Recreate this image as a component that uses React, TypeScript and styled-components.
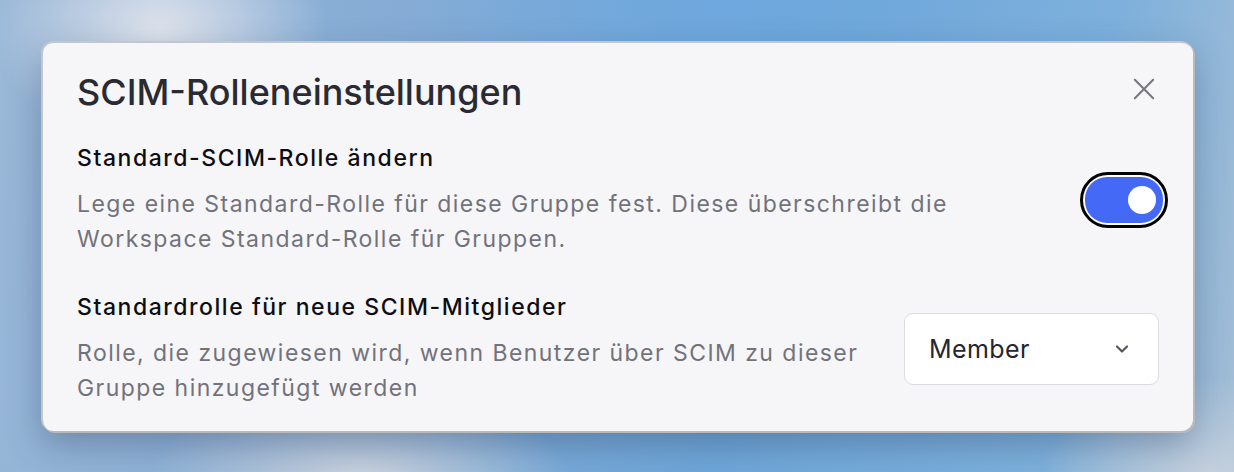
import React, { useState } from "react";
import styled, { createGlobalStyle } from "styled-components";

const GlobalStyle = createGlobalStyle`
  html, body {
    margin: 0;
    padding: 0;
    width: 1234px;
    height: 472px;
    overflow: hidden;
  }
  body {
    font-family: Inter, "Noto Sans", "Liberation Sans", sans-serif;
    -webkit-font-smoothing: antialiased;
  }
`;

const Backdrop = styled.div`
  width: 1234px;
  height: 472px;
  box-sizing: border-box;
  padding: 41px 41px 0 41px;
  background:
    radial-gradient(ellipse 240px 170px at 160px 30px, rgba(226, 229, 236, 0.95), transparent 70%),
    radial-gradient(ellipse 300px 120px at 360px 475px, rgba(206, 212, 222, 0.95), transparent 70%),
    radial-gradient(ellipse 240px 140px at 1210px 475px, rgba(200, 210, 222, 0.9), transparent 70%),
    radial-gradient(ellipse 420px 200px at 720px 0px, rgba(110, 168, 222, 0.9), transparent 70%),
    linear-gradient(100deg, #9ab8d8 0%, #86acd5 30%, #6ea6d9 60%, #7db0dc 85%, #a4bed6 100%);
`;

const Card = styled.div`
  width: 1152px;
  height: 390px;
  box-sizing: border-box;
  background: #f6f6f8;
  border-radius: 12px;
  border-top: 2px solid #c4c6ca;
  border-left: 2px solid #c4c6ca;
  box-shadow: 2px 2px 0 #b9babd, 0 14px 34px rgba(40, 60, 90, 0.35);
  padding: 27px 34px 0 34px;
  display: flex;
  flex-direction: column;
`;

const Header = styled.div`
  display: flex;
  align-items: flex-start;
  justify-content: space-between;
`;

const Title = styled.h2`
  margin: 0;
  font-size: 36px;
  line-height: 44px;
  font-weight: 500;
  color: #2a2a33;
  letter-spacing: 0;
`;

const CloseButton = styled.button`
  border: 0;
  background: transparent;
  padding: 0;
  width: 22px;
  height: 22px;
  margin: 8px 4px 0 0;
  color: #76767e;
  display: flex;
  align-items: center;
  justify-content: center;
  cursor: pointer;
`;

const Row = styled.div<{ $top: number }>`
  display: flex;
  align-items: center;
  justify-content: space-between;
  margin-top: ${(p) => p.$top}px;
`;

const TextBlock = styled.div<{ $width: number }>`
  width: ${(p) => p.$width}px;
  display: flex;
  flex-direction: column;
`;

const Label = styled.div`
  font-size: 23px;
  line-height: 30px;
  font-weight: 500;
  letter-spacing: 1.55px;
  color: #0d0d12;
`;

const Description = styled.div`
  margin-top: 14px;
  font-size: 23px;
  line-height: 35px;
  font-weight: 400;
  letter-spacing: 1.45px;
  color: #72727b;
`;

const SwitchRing = styled.button`
  width: 88px;
  height: 56px;
  box-sizing: border-box;
  border: 3px solid #000;
  border-radius: 28px;
  padding: 2px;
  background: #fff;
  margin-right: -9px;
  cursor: pointer;
  display: flex;
`;

const SwitchTrack = styled.span<{ $on: boolean }>`
  flex: 1;
  border-radius: 22px;
  background: ${(p) => (p.$on ? "#4569f7" : "#c9cad0")};
  display: flex;
  align-items: center;
  justify-content: ${(p) => (p.$on ? "flex-end" : "flex-start")};
  padding: 0 7px;
`;

const Knob = styled.span`
  width: 28px;
  height: 28px;
  border-radius: 50%;
  background: #fff;
`;

const Select = styled.button`
  width: 255px;
  height: 72px;
  box-sizing: border-box;
  background: #fff;
  border: 1px solid #dcdce0;
  border-radius: 9px;
  padding: 0 26px 0 24px;
  display: flex;
  align-items: center;
  justify-content: space-between;
  font-family: inherit;
  font-size: 25px;
  letter-spacing: 0.4px;
  font-weight: 400;
  color: #26262e;
  cursor: pointer;
`;

const Chevron = () => (
  <svg width="20" height="20" viewBox="0 0 24 24" fill="none" stroke="#55555d" strokeWidth="2.6" strokeLinecap="round" strokeLinejoin="round">
    <path d="M6 9l6 6 6-6" />
  </svg>
);

const CloseIcon = () => (
  <svg width="22" height="22" viewBox="0 0 24 24" fill="none" stroke="currentColor" strokeWidth="2.2" strokeLinecap="round">
    <path d="M2 2l20 20M22 2L2 22" />
  </svg>
);

export default function App() {
  const [on, setOn] = useState(true);

  return (
    <>
      <GlobalStyle />
      <Backdrop>
        <Card>
          <Header>
            <Title>SCIM-Rolleneinstellungen</Title>
            <CloseButton aria-label="Schließen">
              <CloseIcon />
            </CloseButton>
          </Header>

          <Row $top={29}>
            <TextBlock $width={900}>
              <Label>Standard-SCIM-Rolle ändern</Label>
              <Description>
                Lege eine Standard-Rolle für diese Gruppe fest. Diese überschreibt die Workspace Standard-Rolle für Gruppen.
              </Description>
            </TextBlock>
            <SwitchRing role="switch" aria-checked={on} onClick={() => setOn(!on)}>
              <SwitchTrack $on={on}>
                <Knob />
              </SwitchTrack>
            </SwitchRing>
          </Row>

          <Row $top={35}>
            <TextBlock $width={815}>
              <Label>Standardrolle für neue SCIM-Mitglieder</Label>
              <Description>
                Rolle, die zugewiesen wird, wenn Benutzer über SCIM zu dieser Gruppe hinzugefügt werden
              </Description>
            </TextBlock>
            <Select>
              Member
              <Chevron />
            </Select>
          </Row>
        </Card>
      </Backdrop>
    </>
  );
}
